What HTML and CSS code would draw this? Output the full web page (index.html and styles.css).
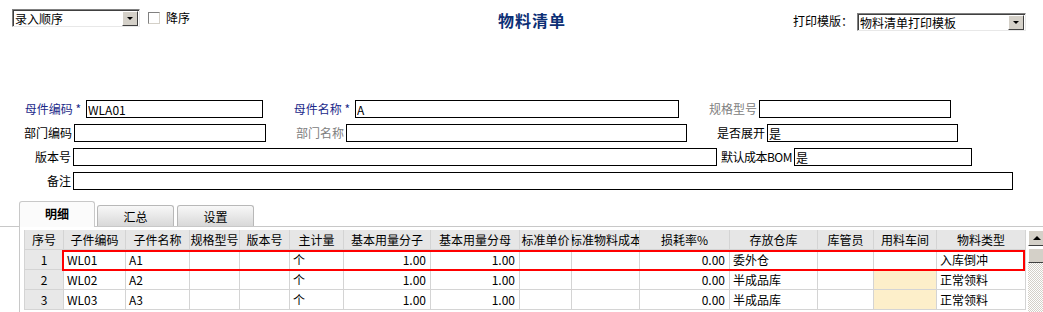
FILE: index.html
```html
<!DOCTYPE html>
<html lang="zh-CN">
<head>
    <meta charset="UTF-8">
    <title>物料清单</title>
    <link rel="stylesheet" href="styles.css">
</head>
<body>
<div class="page">
    <!-- barra superior -->
    <div class="topbar">
        <div class="top-left">
            <div class="combo order"><span class="combo-text">录入顺序</span><span class="combo-btn"></span></div>
            <label class="check"><span class="box"></span>降序</label>
        </div>
        <h1 class="title">物料清单</h1>
        <div class="top-right">
            <span class="print-lbl">打印模版：</span>
            <div class="combo tpl"><span class="combo-text">物料清单打印模板</span><span class="combo-btn"></span></div>
        </div>
    </div>

    <!-- cabecera del BOM -->
    <div class="head-form">
        <div class="frow">
            <span class="lbl req w62">母件编码 *</span><input class="fld w177" value="WLA01">
            <span class="lbl req w92">母件名称 *</span><input class="fld w324" value="A">
            <span class="lbl dim w80">规格型号</span><input class="fld w192" value="">
        </div>
        <div class="frow">
            <span class="lbl w50">部门编码</span><input class="fld w192" value="">
            <span class="lbl dim w80">部门名称</span><input class="fld w341" value="">
            <span class="lbl w80">是否展开</span><input class="fld w191" value="是">
        </div>
        <div class="frow">
            <span class="lbl w49">版本号</span><input class="fld w644" value="">
            <span class="lbl w77 tight">默认成本BOM</span><input class="fld w178" value="是">
        </div>
        <div class="frow">
            <span class="lbl w49">备注</span><input class="fld w940" value="">
        </div>
    </div>

    <!-- pestañas -->
    <div class="tabs">
        <div class="tab active">明细</div>
        <div class="tab">汇总</div>
        <div class="tab">设置</div>
    </div>

    <div class="panel">
        <div class="grid-wrap">
            <table class="grid">
                <colgroup>
                    <col style="width:39px"><col style="width:62px"><col style="width:64px"><col style="width:50px">
                    <col style="width:50px"><col style="width:54px"><col style="width:87px"><col style="width:89px">
                    <col style="width:52px"><col style="width:68px"><col style="width:90px"><col style="width:88px">
                    <col style="width:56px"><col style="width:63px"><col style="width:89px">
                </colgroup>
                <thead>
                    <tr>
                        <th>序号</th><th>子件编码</th><th>子件名称</th><th>规格型号</th><th>版本号</th><th>主计量</th>
                        <th>基本用量分子</th><th>基本用量分母</th><th>标准单价</th><th class="clip"><span>标准物料成本</span></th>
                        <th>损耗率%</th><th>存放仓库</th><th>库管员</th><th>用料车间</th><th>物料类型</th>
                    </tr>
                </thead>
                <tbody>
                    <tr>
                        <td class="no">1</td><td>WL01</td><td>A1</td><td></td><td></td><td>个</td>
                        <td class="num">1.00</td><td class="num">1.00</td><td></td><td></td>
                        <td class="num">0.00</td><td>委外仓</td><td></td><td></td><td>入库倒冲</td>
                    </tr>
                    <tr>
                        <td class="no">2</td><td>WL02</td><td>A2</td><td></td><td></td><td>个</td>
                        <td class="num">1.00</td><td class="num">1.00</td><td></td><td></td>
                        <td class="num">0.00</td><td>半成品库</td><td></td><td class="ws"></td><td>正常领料</td>
                    </tr>
                    <tr>
                        <td class="no">3</td><td>WL03</td><td>A3</td><td></td><td></td><td>个</td>
                        <td class="num">1.00</td><td class="num">1.00</td><td></td><td></td>
                        <td class="num">0.00</td><td>半成品库</td><td></td><td class="ws"></td><td>正常领料</td>
                    </tr>
                </tbody>
            </table>
            <div class="mark"></div>
            <div class="vscroll">
                <div class="sb-up"></div>
                <div class="sb-thumb"></div>
                <div class="sb-track"></div>
            </div>
        </div>
    </div>
</div>
</body>
</html>
```
FILE: styles.css
```css
html, body {
    margin: 0;
    padding: 0;
    overflow: hidden;
    background: #fff;
}
.page {
    width: 1043px;
    height: 312px;
    overflow: hidden;
    font-family: "Noto Sans CJK SC", "Liberation Sans", sans-serif;
    font-size: 12px;
    color: #000;
}

/* barra superior */
.topbar {
    display: flex;
    align-items: flex-start;
    height: 100px;
    box-sizing: border-box;
    padding: 9px 17px 0 12px;
}
.top-left {
    display: flex;
    align-items: flex-start;
    width: 486px;
}
.combo {
    display: flex;
    align-items: center;
    height: 18px;
    box-sizing: border-box;
    border-top: 1px solid #808080;
    border-left: 1px solid #808080;
    border-right: 1px solid #e8e8e8;
    border-bottom: 1px solid #e8e8e8;
    box-shadow: inset 1px 1px 0 #404040;
    background: #fff;
    padding: 1px 1px 0 2px;
}
.combo.order { width: 128px; }
.combo.tpl { width: 169px; height: 18px; margin-top: 4px; }
.combo-text {
    flex: 1;
    line-height: 15px;
    white-space: nowrap;
}
.combo-btn {
    width: 16px;
    height: 15px;
    box-sizing: border-box;
    background: #d4d0c8;
    border-top: 1px solid #fff;
    border-left: 1px solid #fff;
    border-right: 1px solid #404040;
    border-bottom: 1px solid #404040;
    position: relative;
}
.combo-btn::after {
    content: "";
    position: absolute;
    left: 4px;
    top: 5px;
    border-left: 3px solid transparent;
    border-right: 3px solid transparent;
    border-top: 3px solid #000;
}
.check {
    display: flex;
    align-items: center;
    margin-left: 8px;
    margin-top: 2px;
    line-height: 14px;
}
.check .box {
    width: 12px;
    height: 12px;
    box-sizing: border-box;
    border: 1px solid #808080;
    border-right-color: #d4d0c8;
    border-bottom-color: #d4d0c8;
    margin-right: 6px;
}
.title {
    margin: 2px 0 0 0;
    font-size: 16px;
    line-height: 18px;
    font-weight: bold;
    color: #0c2f75;
    letter-spacing: 1px;
}
.top-right {
    margin-left: auto;
    display: flex;
    align-items: flex-start;
}
.print-lbl {
    margin-top: 4px;
    margin-right: 4px;
    line-height: 16px;
}

/* formulario */
.head-form {
    padding-left: 24px;
}
.frow {
    display: flex;
    height: 18px;
    margin-bottom: 6px;
}
.lbl {
    box-sizing: border-box;
    text-align: right;
    padding-right: 2px;
    line-height: 18px;
    white-space: nowrap;
}
.lbl.req {
    color: #1c2a8a;
    padding-right: 5px;
}
.lbl.dim { color: #808080; }
.lbl.tight { letter-spacing: -0.5px; }
.fld {
    height: 18px;
    box-sizing: border-box;
    border: 1px solid #000;
    margin: 0;
    padding: 0 1px;
    font-family: "Noto Sans CJK SC", "Liberation Sans", sans-serif;
    font-size: 12px;
    outline: none;
    background: #fff;
}
.w49 { width: 49px; }
.w50 { width: 50px; }
.w62 { width: 62px; }
.w77 { width: 77px; }
.w80 { width: 80px; }
.w92 { width: 92px; }
.w177 { width: 177px; }
.w178 { width: 178px; }
.w191 { width: 191px; }
.w192 { width: 192px; }
.w324 { width: 324px; }
.w341 { width: 341px; }
.w644 { width: 644px; }
.w940 { width: 940px; }

/* pestañas */
.tabs {
    display: flex;
    align-items: flex-end;
    margin-top: 11px;
    padding-left: 19px;
    height: 25px;
    border-bottom: 1px solid #c8c8c8;
}
.tab {
    box-sizing: border-box;
    width: 77px;
    height: 21px;
    margin-right: 3px;
    border: 1px solid #b8b8b8;
    border-bottom: none;
    border-radius: 3px 3px 0 0;
    background: linear-gradient(#f8f8f8, #d8d8d8);
    text-align: center;
    line-height: 21px;
}
.tab.active {
    width: 76px;
    height: 26px;
    margin-bottom: -1px;
    margin-right: 2px;
    background: #fbfbfb;
    border-color: #c8c8c8;
    font-weight: bold;
    line-height: 24px;
}

.panel {
    margin-left: 19px;
    border-left: 1px solid #c8c8c8;
    padding: 3px 0 0 4px;
}
.grid-wrap {
    position: relative;
    display: flex;
    align-items: flex-start;
}
.grid {
    border-collapse: collapse;
    table-layout: fixed;
    width: 1001px;
}
.grid th, .grid td {
    height: 19px;
    padding: 0 3px;
    border: 1px solid #d4d4d4;
    white-space: nowrap;
    overflow: hidden;
    font-size: 12px;
    line-height: 18px;
}
.grid th {
    background: #e6e6e6;
    font-weight: normal;
    text-align: center;
    border-top: none;
    padding: 0;
}
.grid th.clip span {
    display: block;
    margin: 0 -2px;
    text-align: center;
}
.grid td { text-align: left; }
.grid td.no {
    background: #e8e8e8;
    text-align: center;
}
.grid td.num {
    text-align: right;
    padding-right: 4px;
}
.grid td.ws { background: #fdefca; }

.mark {
    position: absolute;
    left: 38px;
    top: 20px;
    width: 963px;
    height: 21px;
    box-sizing: border-box;
    border: 2px solid #f00;
}

.vscroll {
    margin-left: 2px;
    width: 17px;
    flex: none;
}
.sb-up, .sb-thumb {
    height: 16px;
    box-sizing: border-box;
    background: #d4d0c8;
    border-top: 1px solid #fff;
    border-left: 1px solid #fff;
    border-right: 1px solid #404040;
    border-bottom: 1px solid #404040;
    position: relative;
}
.sb-up::after {
    content: "";
    position: absolute;
    left: 4px;
    top: 5px;
    border-left: 4px solid transparent;
    border-right: 4px solid transparent;
    border-bottom: 4px solid #000;
}
.sb-thumb {
    margin-top: 2px;
    height: 15px;
}
.sb-track {
    height: 60px;
    background-color: #fff;
    background-image: repeating-conic-gradient(#d4d0c8 0 25%, #fff 0 50%);
    background-size: 2px 2px;
}
```
